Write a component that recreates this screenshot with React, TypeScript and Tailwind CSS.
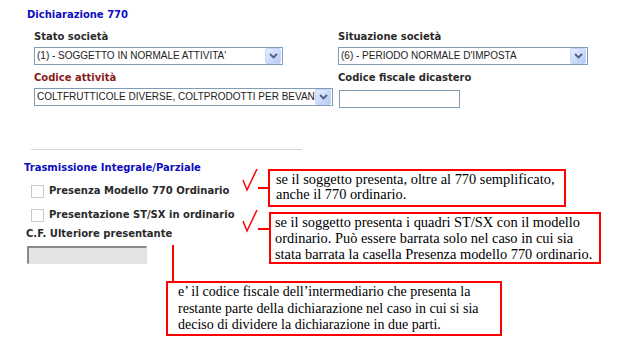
import React from 'react';

// Windows XP style select box with the blue arrow button
const XpSelect: React.FC<{ value: string; width: string }> = ({ value, width }) => {
  return (
    <div
      className={`${width} h-[18px] border border-[#7f9db9] bg-white flex items-center justify-between pl-[2px] pr-[1px]`}
    >
      <span
        className="text-[10px] leading-none text-[#222] whitespace-nowrap overflow-hidden"
        style={{ fontFamily: '"Liberation Sans", Arial, sans-serif' }}
      >
        {value}
      </span>
      <div className="w-[16px] h-[16px] shrink-0 rounded-[2px] border border-[#c3d3fd] bg-gradient-to-br from-[#e6eeff] to-[#b7c9f5] flex items-center justify-center">
        <svg width="9" height="6" viewBox="0 0 9 6">
          <path d="M1 1 L4.5 4.5 L8 1" fill="none" stroke="#4d6185" strokeWidth="1.8" />
        </svg>
      </div>
    </div>
  );
};

const Check: React.FC<{ className: string }> = ({ className }) => (
  <svg className={`absolute ${className}`} width="16" height="24" viewBox="0 0 16 24">
    <path d="M1 12 L5 22 L15 1" fill="none" stroke="#ff0000" strokeWidth="1.5" />
  </svg>
);

const serif = { fontFamily: '"Liberation Serif", "Times New Roman", serif' };

export default function App() {
  return (
    <div
      className="relative w-[618px] h-[341px] bg-white overflow-hidden text-[#2a2a2a]"
      style={{ fontFamily: '"DejaVu Sans", Verdana, sans-serif' }}
    >
      {/* Header */}
      <div className="pl-[27px] pt-[8px] text-[10px] font-bold text-[#0d0dbf] leading-[14px]">
        Dichiarazione 770
      </div>

      {/* Top form */}
      <div className="pl-[34px] mt-[8px] grid grid-cols-[304px_1fr]">
        <div className="flex flex-col">
          <div className="text-[10px] font-bold leading-[14px] h-[17px]">Stato società</div>
          <XpSelect value="(1) - SOGGETTO IN NORMALE ATTIVITA'" width="w-[249px]" />
          <div className="text-[10px] font-bold leading-[14px] text-[#8a1b1b] mt-[6px] h-[17px]">
            Codice attività
          </div>
          <XpSelect value="COLTFRUTTICOLE DIVERSE, COLTPRODOTTI PER BEVAN" width="w-[299px]" />
        </div>
        <div className="flex flex-col">
          <div className="text-[10px] font-bold leading-[14px] h-[17px]">Situazione società</div>
          <XpSelect value="(6) - PERIODO NORMALE D'IMPOSTA" width="w-[250px]" />
          <div className="text-[10px] font-bold leading-[14px] mt-[6px] h-[17px]">
            Codice fiscale dicastero
          </div>
          <div className="w-[121px] h-[18px] mt-[2px] ml-[1px] border border-[#7f9db9] bg-white" />
        </div>
      </div>

      {/* Divider */}
      <div className="ml-[31px] mt-[41px] w-[271px] h-px bg-[#d4d4d4]" />

      {/* Trasmissione */}
      <div className="pl-[24px] mt-[11px] text-[10px] font-bold text-[#0d0dbf] leading-[14px]">
        Trasmissione Integrale/Parziale
      </div>
      <div className="pl-[31px] mt-[9px] flex flex-col gap-[10px]">
        <label className="flex items-center gap-[5px] h-[14px]">
          <span className="w-[13px] h-[13px] border border-[#c8c8c8] bg-white" />
          <span className="text-[10px] font-bold leading-[14px]">Presenza Modello 770 Ordinario</span>
        </label>
        <label className="flex items-center gap-[5px] h-[14px]">
          <span className="w-[13px] h-[13px] border border-[#c8c8c8] bg-white" />
          <span className="text-[10px] font-bold leading-[14px]">Presentazione ST/SX in ordinario</span>
        </label>
      </div>
      <div className="pl-[26px] mt-[5px] text-[10px] font-bold leading-[14px]">
        C.F. Ulteriore presentante
      </div>
      <div className="ml-[27px] mt-[5px] w-[120px] h-[18px] bg-[#e4e4e4] border-t-2 border-l-2 border-[#8a8a8a] border-r border-b border-r-[#e0e0e0] border-b-[#e0e0e0]" />

      {/* Annotations */}
      <Check className="left-[242px] top-[168px]" />
      <div className="absolute left-[258px] top-[187px] w-[11px] h-[2px] bg-[#ff0000]" />
      <div
        className="absolute left-[268px] top-[169px] w-[298px] h-[38px] border-2 border-[#ff0000] pl-[6px] pt-[1px] text-[14.4px] leading-[15px] text-black"
        style={serif}
      >
        se il soggetto presenta, oltre al 770 semplificato,
        <br />
        anche il 770 ordinario.
      </div>

      <Check className="left-[242px] top-[209px]" />
      <div className="absolute left-[258px] top-[228px] w-[12px] h-[2px] bg-[#ff0000]" />
      <div
        className="absolute left-[269px] top-[212px] w-[332px] h-[52px] border-2 border-[#ff0000] pl-[4px] pt-0 text-[14.4px] leading-[16px] text-black"
        style={serif}
      >
        se il soggetto presenta i quadri ST/SX con il modello
        <br />
        ordinario. Può essere barrata solo nel caso in cui sia
        <br />
        stata barrata la casella Presenza modello 770 ordinario.
      </div>

      <div className="absolute left-[172px] top-[245px] w-[2px] h-[37px] bg-[#ff0000]" />
      <div
        className="absolute left-[166px] top-[281px] w-[336px] h-[55px] border-2 border-[#ff0000] pl-[10px] pt-[1px] text-[14px] leading-[16.5px] text-black"
        style={serif}
      >
        e’ il codice fiscale dell’intermediario che presenta la
        <br />
        restante parte della dichiarazione nel caso in cui si sia
        <br />
        deciso di dividere la dichiarazione in due parti.
      </div>
    </div>
  );
}
